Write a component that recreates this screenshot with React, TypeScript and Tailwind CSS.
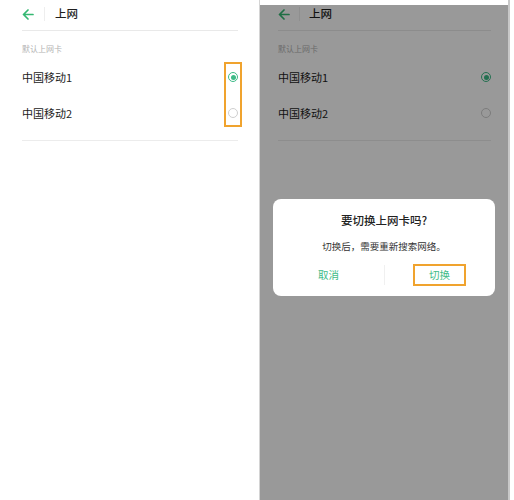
import React from 'react'

const font = { fontFamily: '"Noto Sans CJK SC", "Noto Sans", sans-serif' }

function BackArrow() {
  return (
    <svg width="12" height="11" viewBox="0 0 12 11" fill="none">
      <path d="M11 5.5H1.8M6 1 1.5 5.5 6 10" stroke="#34b872" strokeWidth="1.7" strokeLinecap="round" strokeLinejoin="round" />
    </svg>
  )
}

function Radio({ checked }: { checked: boolean }) {
  if (checked) {
    return (
      <div className="w-[10px] h-[10px] rounded-full border border-[#3dbb87] p-[1.5px] flex">
        <div className="flex-1 rounded-full bg-[#3dbb87]" />
      </div>
    )
  }
  return <div className="w-[10px] h-[10px] rounded-full border border-[#cfcfcf]" />
}

function Screen({ padLeft, width, gap }: { padLeft: string; width: string; gap: string }) {
  return (
    <div className={`flex flex-col ${padLeft}`}>
      <div className={`flex items-center h-[30px] pb-[2px] ${width}`}>
        <BackArrow />
        <div className={`w-px h-[14px] bg-[#eeeeee] ${gap}`} />
        <span className={`${gap} text-[11.5px] font-medium text-[#1f1f1f] leading-none`}>上网</span>
      </div>
      <div className={`h-px bg-[#e9e9e9] ${width}`} />
      <div className={`h-[28px] pt-[8px] flex items-center ${width}`}>
        <span className="text-[8px] text-[#b3b3b3] leading-none">默认上网卡</span>
      </div>
      <div className={`h-[36px] flex items-center justify-between ${width}`}>
        <span className="text-[11px] text-[#222222] leading-none">中国移动1</span>
        <Radio checked />
      </div>
      <div className={`h-[36px] flex items-center justify-between ${width}`}>
        <span className="text-[11px] text-[#222222] leading-none">中国移动2</span>
        <Radio checked={false} />
      </div>
      <div className={`h-px bg-[#ececec] mt-[9px] ${width}`} />
    </div>
  )
}

export default function App() {
  return (
    <div className="w-[514px] h-[500px] bg-white flex overflow-hidden" style={font}>
      {/* left screen */}
      <div className="relative w-[259px] h-full bg-white">
        <Screen padLeft="pl-[22px]" width="w-[216px]" gap="ml-[10px]" />
        <div className="absolute left-[224px] top-[62px] w-[18px] h-[65px] border-2 border-[#f0a32e]" />
      </div>

      <div className="w-px h-full bg-[#d4d4d4]" />

      {/* right screen with dialog */}
      <div className="relative w-[248px] h-full bg-white">
        <Screen padLeft="pl-[18px]" width="w-[213px]" gap="ml-[9px]" />
        <div className="absolute left-0 right-0 top-[5px] bottom-0 bg-black/40 flex flex-col px-[13px] pt-[194px]">
          <div className="h-[97px] bg-white rounded-[8px] flex flex-col items-center pt-[14px]">
            <div className="h-[16px] flex items-center text-[11.5px] font-medium text-[#222222] leading-none">要切换上网卡吗?</div>
            <div className="h-[14px] mt-[11px] flex items-center text-[9.5px] text-[#333333] leading-none">切换后，需要重新搜索网络。</div>
            <div className="w-full mt-[10px] h-[22px] grid grid-cols-2 relative">
              <div className="flex items-center justify-center text-[10.5px] text-[#3dbb87]">取消</div>
              <div className="flex items-center justify-center">
                <div className="w-[53px] h-[22px] border-2 border-[#f0a32e] flex items-center justify-center text-[10.5px] text-[#3dbb87]">切换</div>
              </div>
              <div className="absolute left-1/2 top-[1px] w-px h-[20px] bg-[#f0f0f0]" />
            </div>
          </div>
        </div>
      </div>

      <div className="w-[2px] h-full bg-[#c8c8c8]" />
    </div>
  )
}
